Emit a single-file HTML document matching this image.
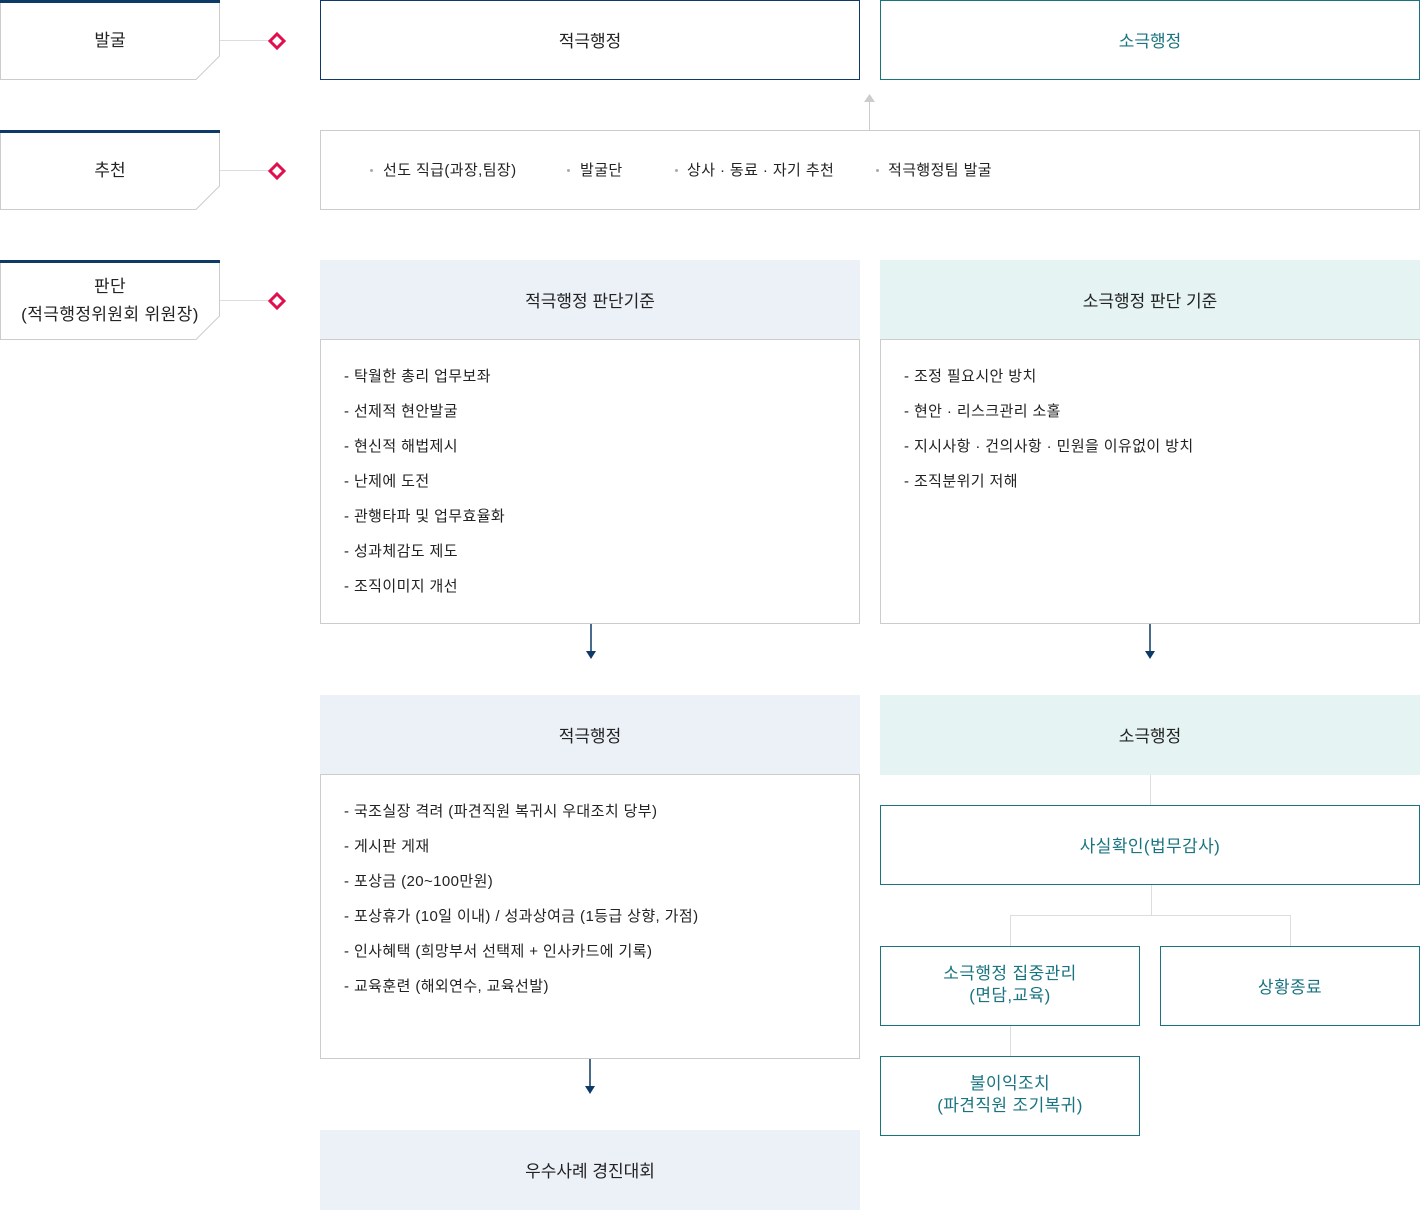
<!DOCTYPE html>
<html><head><meta charset="utf-8"><style>
*{margin:0;padding:0;box-sizing:border-box}
body{width:1420px;height:1210px;position:relative;background:#fff;font-family:"Liberation Sans","Noto Sans CJK KR",sans-serif;color:#222;overflow:hidden}
.a{position:absolute}
.c{display:flex;align-items:center;justify-content:center;text-align:center;padding-bottom:2px}
.nv{border:1px solid #0d3a66}
.tl{border:1px solid #1a7480;color:#1a7480}
.gr{border:1px solid #ccc}
.hb{background:#ecf1f8;font-size:17px}
.ht{background:#e5f3f2;font-size:17px}
.lst{font-size:15px;padding:25px 0 0 23px;letter-spacing:0.4px}
.lst div{height:35px;line-height:24px}
.vl{position:absolute;width:1px;background:#ddd}
.hl{position:absolute;height:1px;background:#ddd}
.lbl{font-size:17px;line-height:28px}
.rc{font-size:15px;letter-spacing:0.4px}
.dot{position:absolute;width:3px;height:3px;border-radius:50%;background:#aaa;top:38px}
</style></head><body>
<svg class="a" style="left:0;top:0" width="300" height="345">
<g fill="#fff" stroke="#ccc" stroke-width="1">
<path d="M0.5 2 H219.5 V56 L196 79.5 H0.5 Z"/>
<path d="M0.5 132 H219.5 V186 L196 209.5 H0.5 Z"/>
<path d="M0.5 262 H219.5 V316 L196 339.5 H0.5 Z"/>
</g>
<rect x="0" y="0" width="220" height="3" fill="#0d3a66"/>
<rect x="0" y="130" width="220" height="3" fill="#0d3a66"/>
<rect x="0" y="260" width="220" height="3" fill="#0d3a66"/>
<g stroke="#ddd"><line x1="220" y1="40.5" x2="270" y2="40.5"/><line x1="220" y1="170.5" x2="270" y2="170.5"/><line x1="220" y1="300.5" x2="270" y2="300.5"/></g>
<g fill="none" stroke="#e0104f" stroke-width="3">
<path d="M277 34 L284 41 L277 48 L270 41 Z"/>
<path d="M277 164 L284 171 L277 178 L270 171 Z"/>
<path d="M277 294 L284 301 L277 308 L270 301 Z"/>
</g>
</svg>
<div class="a c lbl" style="left:0;top:3px;width:220px;height:77px">발굴</div>
<div class="a c lbl" style="left:0;top:133px;width:220px;height:77px">추천</div>
<div class="a c lbl" style="left:0;top:263px;width:220px;height:77px;letter-spacing:0.4px">판단<br>(적극행정위원회 위원장)</div>

<div class="a c nv" style="left:320px;top:0;width:540px;height:80px;font-size:17px">적극행정</div>
<div class="a c tl" style="left:880px;top:0;width:540px;height:80px;font-size:17px">소극행정</div>
<div class="vl" style="left:869px;top:100px;height:30px;background:#ccc"></div>
<svg class="a" style="left:864px;top:94px" width="11" height="9"><path d="M5.5 0 L11 8 H0 Z" fill="#ccc"/></svg>

<div class="a gr rc" style="left:320px;top:130px;width:1100px;height:80px">
<span class="dot" style="left:49px"></span><span class="a" style="left:62px;top:28px">선도 직급(과장,팀장)</span>
<span class="dot" style="left:246px"></span><span class="a" style="left:259px;top:28px">발굴단</span>
<span class="dot" style="left:354px"></span><span class="a" style="left:366px;top:28px">상사 · 동료 · 자기 추천</span>
<span class="dot" style="left:555px"></span><span class="a" style="left:567px;top:28px">적극행정팀 발굴</span>
</div>

<div class="a c hb" style="left:320px;top:260px;width:540px;height:80px">적극행정 판단기준</div>
<div class="a gr lst" style="left:320px;top:339px;width:540px;height:285px">
<div>- 탁월한 총리 업무보좌</div><div>- 선제적 현안발굴</div><div>- 현신적 해법제시</div><div>- 난제에 도전</div><div>- 관행타파 및 업무효율화</div><div>- 성과체감도 제도</div><div>- 조직이미지 개선</div></div>
<div class="a c ht" style="left:880px;top:260px;width:540px;height:80px">소극행정 판단 기준</div>
<div class="a gr lst" style="left:880px;top:339px;width:540px;height:285px">
<div>- 조정 필요시안 방치</div><div>- 현안 · 리스크관리 소홀</div><div>- 지시사항 · 건의사항 · 민원을 이유없이 방치</div><div>- 조직분위기 저해</div></div>

<svg class="a" style="left:585px;top:624px" width="12" height="36"><line x1="6" y1="0" x2="6" y2="30" stroke="#0d3a66" stroke-width="1.5"/><path d="M1 27 H11 L6 35 Z" fill="#0d3a66"/></svg>
<svg class="a" style="left:1144px;top:624px" width="12" height="36"><line x1="6" y1="0" x2="6" y2="30" stroke="#0d3a66" stroke-width="1.5"/><path d="M1 27 H11 L6 35 Z" fill="#0d3a66"/></svg>

<div class="a c hb" style="left:320px;top:695px;width:540px;height:80px">적극행정</div>
<div class="a gr lst" style="left:320px;top:774px;width:540px;height:285px">
<div>- 국조실장 격려 (파견직원 복귀시 우대조치 당부)</div><div>- 게시판 게재</div><div>- 포상금 (20~100만원)</div><div>- 포상휴가 (10일 이내) / 성과상여금 (1등급 상향, 가점)</div><div>- 인사혜택 (희망부서 선택제 + 인사카드에 기록)</div><div>- 교육훈련 (해외연수, 교육선발)</div></div>
<svg class="a" style="left:584px;top:1059px" width="12" height="36"><line x1="6" y1="0" x2="6" y2="30" stroke="#0d3a66" stroke-width="1.5"/><path d="M1 27 H11 L6 35 Z" fill="#0d3a66"/></svg>
<div class="a c hb" style="left:320px;top:1130px;width:540px;height:80px">우수사례 경진대회</div>

<div class="a c ht" style="left:880px;top:695px;width:540px;height:80px">소극행정</div>
<div class="vl" style="left:1150px;top:775px;height:30px"></div>
<div class="a c tl" style="left:880px;top:805px;width:540px;height:80px;font-size:17px;letter-spacing:0.4px">사실확인(법무감사)</div>
<div class="vl" style="left:1151px;top:885px;height:30px"></div>
<div class="hl" style="left:1010px;top:915px;width:281px"></div>
<div class="vl" style="left:1010px;top:915px;height:31px"></div>
<div class="vl" style="left:1290px;top:915px;height:31px"></div>
<div class="a c tl" style="left:880px;top:946px;width:260px;height:80px;font-size:17px;line-height:22px;letter-spacing:0.4px">소극행정 집중관리<br>(면담,교육)</div>
<div class="a c tl" style="left:1160px;top:946px;width:260px;height:80px;font-size:17px;letter-spacing:0.4px">상황종료</div>
<div class="vl" style="left:1010px;top:1026px;height:30px"></div>
<div class="a c tl" style="left:880px;top:1056px;width:260px;height:80px;font-size:17px;line-height:22px;letter-spacing:0.4px">불이익조치<br>(파견직원 조기복귀)</div>
</body></html>
